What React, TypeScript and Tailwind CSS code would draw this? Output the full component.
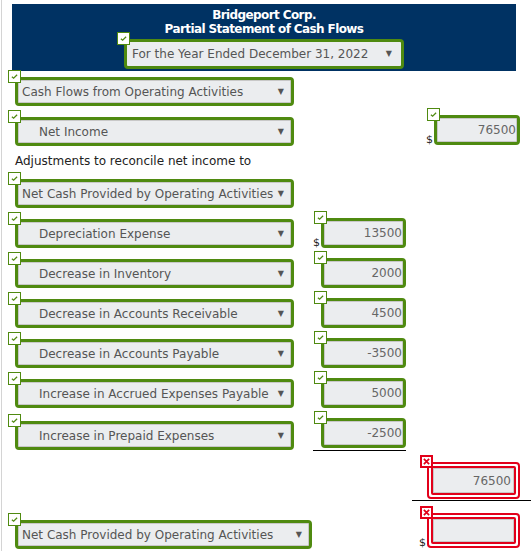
import type { ReactNode } from "react";

const font = { fontFamily: '"DejaVu Sans", Verdana, sans-serif' };

// small status badge that sits on the top-left corner of each field
const Badge = ({ bad = false }: { bad?: boolean }) =>
  bad ? (
    <span className="absolute -left-[7px] -top-[7px] z-10 flex h-[13px] w-[13px] items-center justify-center border-2 border-[#e2001a] bg-white">
      <svg viewBox="0 0 8 8" className="h-[7px] w-[7px]">
        <path d="M1 1 L7 7 M7 1 L1 7" stroke="#e2001a" strokeWidth="2" />
      </svg>
    </span>
  ) : (
    <span className="absolute -left-[7px] -top-[7px] z-10 flex h-[13px] w-[13px] items-center justify-center border-[1.5px] border-[#4f8a10] bg-white">
      <svg viewBox="0 0 8 8" className="h-[7px] w-[7px]">
        <path d="M1 4.3 L3 6 L7 2" stroke="#4f8a10" strokeWidth="1.4" fill="none" />
      </svg>
    </span>
  );

interface SelectProps {
  label: string;
  indent?: boolean;
  width?: string;
}

const Select = ({ label, indent = false, width = "w-[279px]" }: SelectProps) => (
  <div className={`relative ${width}`}>
    <Badge />
    <div className="flex h-[29px] items-center justify-between rounded-[4px] border-[3px] border-[#4f8a10] bg-[#ebedef] pr-[7px] shadow-[inset_0_0_0_1px_#c8c8c8]">
      <span className={`whitespace-nowrap text-[12px] text-[#555] ${indent ? "pl-[21px]" : "pl-[4px]"}`}>{label}</span>
      <span className="text-[8px] text-[#555]">▼</span>
    </div>
  </div>
);

interface AmountProps {
  value?: string;
  dollar?: boolean;
  bad?: boolean;
  width?: string;
  height?: string;
}

const Amount = ({ value = "", dollar = false, bad = false, width = "w-[85px]", height = "h-[30px]" }: AmountProps) => (
  <div className={`relative ${width}`}>
    <Badge bad={bad} />
    {dollar && (
      <span className="absolute -left-[8px] bottom-[-3px] text-[11px] text-[#222]">$</span>
    )}
    {bad ? (
      <div className={`${height} rounded-[4px] border-2 border-[#e2001a] p-[2px]`}>
        <div className="flex h-full items-center justify-end rounded-[2px] border-2 border-[#e2001a] bg-[#ebedef] pr-[3px] text-[12px] text-[#666] shadow-[inset_0_0_0_1px_#c8c8c8]">
          {value}
        </div>
      </div>
    ) : (
      <div className={`flex ${height} items-center justify-end rounded-[4px] border-[3px] border-[#4f8a10] bg-[#ebedef] pr-[1px] text-[12px] text-[#666] shadow-[inset_0_0_0_1px_#c8c8c8]`}>
        {value}
      </div>
    )}
  </div>
);

const Row = ({ children, className = "" }: { children: ReactNode; className?: string }) => (
  <div className={`flex items-start ${className}`}>{children}</div>
);

const adjustments = [
  { label: "Depreciation Expense", value: "13500", dollar: true },
  { label: "Decrease in Inventory", value: "2000" },
  { label: "Decrease in Accounts Receivable", value: "4500" },
  { label: "Decrease in Accounts Payable", value: "-3500" },
  { label: "Increase in Accrued Expenses Payable", value: "5000" },
];

export default function App() {
  return (
    <div className="relative h-[551px] w-[531px] overflow-hidden bg-white" style={font}>
      <div className="absolute left-[1px] top-0 h-full w-[1px] bg-[#d4d4d4]" />

      <header className="ml-[12px] mt-[4px] flex h-[67px] w-[504px] flex-col items-center bg-[#003263] pt-[4px]">
        <div className="text-[12px] font-bold leading-[14px] tracking-[-0.6px] text-white">Bridgeport Corp.</div>
        <div className="text-[12px] font-bold leading-[14px] tracking-[-0.6px] text-white">Partial Statement of Cash Flows</div>
        <div className="relative mt-[3px] w-[280px]">
          <Badge />
          <div className="flex h-[30px] items-center justify-between rounded-[4px] border-[3px] border-[#4f8a10] bg-[#ebedef] pl-[5px] pr-[9px]">
            <span className="text-[12px] text-[#555]">For the Year Ended December 31, 2022</span>
            <span className="text-[8px] text-[#555]">▼</span>
          </div>
        </div>
      </header>

      <div className="pl-[15px]">
        <Row className="mt-[6px]">
          <Select label="Cash Flows from Operating Activities" />
        </Row>

        <Row className="mt-[11px]">
          <Select label="Net Income" indent />
          <div className="ml-[140px] -mt-[2px]">
            <Amount value="76500" dollar width="w-[86px]" />
          </div>
        </Row>

        <div className="mt-[6px] text-[12px] leading-[18px] text-[#222]">Adjustments to reconcile net income to</div>

        <Row className="mt-[9px]">
          <Select label="Net Cash Provided by Operating Activities" />
        </Row>

        {adjustments.map((a) => (
          <Row key={a.label} className="mt-[11px]">
            <Select label={a.label} indent />
            <div className="ml-[27px] -mt-[1px]">
              <Amount value={a.value} dollar={a.dollar} />
            </div>
          </Row>
        ))}

        <Row className="mt-[13px]">
          <Select label="Increase in Prepaid Expenses" indent />
          <div className="ml-[19px] -mt-[3px] flex flex-col">
            <div className="pl-[8px]">
              <Amount value="-2500" />
            </div>
            <div className="mt-[2px] h-[1px] w-[93px] bg-black" />
          </div>
        </Row>

        <div className="ml-[397px] mt-[11px] flex flex-col">
          <div className="pl-[15px]">
            <Amount value="76500" bad width="w-[93px]" height="h-[37px]" />
          </div>
          <div className="mt-[1px] h-[1px] w-[119px] bg-black" />
        </div>

        <Row className="mt-[19px]">
          <Select label="Net Cash Provided by Operating Activities" width="w-[297px]" />
          <div className="ml-[100px] -mt-[7px] flex flex-col">
            <div className="pl-[15px]">
              <Amount bad dollar width="w-[93px]" height="h-[35px]" />
            </div>
            <div className="mt-[4px] h-[1px] w-[119px] bg-black" />
          </div>
        </Row>
      </div>
    </div>
  );
}
